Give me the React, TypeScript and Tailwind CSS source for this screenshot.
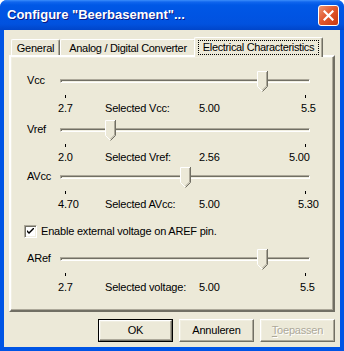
import React from 'react';

const sliders = [
  { label: 'Vcc', min: '2.7', max: '5.5', text: 'Selected Vcc:', value: '5.00', frac: 0.821, valW: 'w-[102px]', mt: 'mt-0' },
  { label: 'Vref', min: '2.0', max: '5.00', text: 'Selected Vref:', value: '2.56', frac: 0.187, valW: 'w-[90px]', mt: 'mt-[5px]' },
  { label: 'AVcc', min: '4.70', max: '5.30', text: 'Selected AVcc:', value: '5.00', frac: 0.5, valW: 'w-[99px]', mt: 'mt-[3px]' },
];

function Thumb({ left }: { left: number }) {
  return (
    <svg className="absolute top-0" style={{ left }} width="11" height="21" viewBox="0 0 11 21">
      <polygon points="0.5,0.5 10.5,0.5 10.5,15.5 5.5,20.5 0.5,15.5" fill="#ECE9D8" />
      <polyline points="5,20 0.5,15.5 0.5,0.5 10,0.5" fill="none" stroke="#FFFFFF" />
      <polyline points="10.5,0 10.5,15.5 5.5,20.5" fill="none" stroke="#716F64" />
      <polyline points="9.5,1 9.5,15 5.5,19" fill="none" stroke="#ACA899" />
    </svg>
  );
}

function Track({ label, frac }: { label: string; frac: number }) {
  return (
    <div className="flex ml-[16px]">
      <span className="w-[33px] mt-[3px] leading-[13px]">{label}</span>
      <div className="relative w-[250px] h-[31px]">
        <div className="absolute left-0 top-[8px] w-[250px] h-[4px] border border-t-[#ACA899] border-l-[#ACA899] border-b-white border-r-white shadow-[inset_1px_1px_#716F64,inset_-1px_-1px_#F1EFE2]" />
        <Thumb left={Math.round(frac * 240)} />
        <div className="absolute left-[5px] top-[24px] w-px h-[3px] bg-black" />
        <div className="absolute left-[245px] top-[24px] w-px h-[3px] bg-black" />
      </div>
    </div>
  );
}

function Labels({ min, text, value, max, valW }: { min: string; text: string; value: string; max: string; valW: string }) {
  return (
    <div className="flex ml-[47px] leading-[13px]">
      <span className="w-[47px]">{min}</span>
      <span className="w-[94px]">{text}</span>
      <span className={valW}>{value}</span>
      <span>{max}</span>
    </div>
  );
}

function Button({ children, primary, disabled }: { children: React.ReactNode; primary?: boolean; disabled?: boolean }) {
  return (
    <div className={`w-[75px] h-[23px] ${primary ? 'border border-black' : ''}`}>
      <div className="w-full h-full flex items-center justify-center border border-t-white border-l-white border-r-[#716F64] border-b-[#716F64] shadow-[inset_-1px_-1px_#ACA899,inset_1px_1px_#F1EFE2]">
        <span className={disabled ? 'text-[#ACA899] [text-shadow:1px_1px_#FFFFFF]' : ''}>{children}</span>
      </div>
    </div>
  );
}

export default function App() {
  return (
    <div className="w-[344px] h-[351px] flex flex-col bg-[#0055E5] rounded-t-[7px] overflow-hidden font-['Liberation_Sans',Arial,sans-serif] text-[11px] text-black whitespace-nowrap tracking-[-0.2px]">
      {/* Title bar */}
      <div className="h-[30px] shrink-0 flex items-center pl-[7px] pr-[5px] bg-[linear-gradient(to_bottom,#3C8EFB_0px,#1066EE_2px,#0058E6_5px,#0054E3_15px,#0152DF_24px,#0045C9_30px)]">
        <span className="flex-1 text-white font-bold text-[13px] tracking-normal [text-shadow:1px_1px_#0A1883]">Configure "Beerbasement"...</span>
        <div className="w-[21px] h-[21px] rounded-[3px] border border-white bg-[linear-gradient(135deg,#EC9471_0%,#E2592F_45%,#C7370F_100%)] flex items-center justify-center">
          <svg width="11" height="11" viewBox="0 0 11 11">
            <path d="M1.5 1.5 L9.5 9.5 M9.5 1.5 L1.5 9.5" stroke="#FFFFFF" strokeWidth="2.2" strokeLinecap="square" />
          </svg>
        </div>
      </div>

      {/* Client area */}
      <div className="flex-1 mx-[4px] mb-[4px] bg-[#ECE9D8] flex flex-col pt-[7px] px-[5px]">
        {/* Tabs */}
        <div className="flex items-end h-[18px] pl-[2px] relative z-10">
          <div className="w-[49px] h-[16px] flex items-center justify-center border-l border-t border-r border-l-white border-t-white border-r-[#716F64] rounded-t-[2px] shadow-[inset_-1px_0_#ACA899] pt-[1px]">
            General
          </div>
          <div className="w-[136px] h-[16px] flex items-center justify-center border-l border-t border-r border-l-white border-t-white border-r-[#716F64] rounded-t-[2px] shadow-[inset_-1px_0_#ACA899] pt-[1px] tracking-[-0.3px]">
            Analog / Digital Converter
          </div>
          <div className="-ml-[2px] -mb-[2px] w-[129px] h-[20px] bg-[#ECE9D8] flex pt-[2px] pl-[3px] border-l border-t border-r border-l-white border-t-white border-r-[#716F64] rounded-t-[2px] shadow-[inset_-1px_0_#ACA899]">
            <div className="w-[121px] h-[15px] flex items-center justify-center border border-dotted border-black tracking-[-0.35px]">
              Electrical Characteristics
            </div>
          </div>
        </div>

        {/* Panel */}
        <div className="h-[257px] flex flex-col pt-[14px] border-2 border-t-white border-l-white border-r-[#716F64] border-b-[#716F64] shadow-[inset_-1px_-1px_#ACA899,inset_1px_1px_#F1EFE2]">
          {sliders.map((s) => (
            <div key={s.label} className={s.mt}>
              <Track label={s.label} frac={s.frac} />
              <Labels min={s.min} text={s.text} value={s.value} max={s.max} valW={s.valW} />
            </div>
          ))}

          <div className="flex items-center mt-[14px] ml-[13px] h-[13px]">
            <div className="w-[13px] h-[13px] border border-t-[#ACA899] border-l-[#ACA899] border-b-white border-r-white shadow-[inset_1px_1px_#716F64,inset_-1px_-1px_#F1EFE2] bg-white flex items-center justify-center">
              <svg width="7" height="7" viewBox="0 0 7 7">
                <path d="M0 2 L0 4 L2 6 L7 1 L7 -1 L2 4 Z" fill="#000000" />
              </svg>
            </div>
            <span className="ml-[4px] leading-[13px]">Enable external voltage on AREF pin.</span>
          </div>

          <div className="mt-[11px]">
            <Track label="ARef" frac={0.821} />
            <div className="mt-[1px]">
              <Labels min="2.7" text="Selected voltage:" value="5.00" max="5.5" valW="w-[101px]" />
            </div>
          </div>
        </div>

        {/* Buttons */}
        <div className="flex justify-end gap-[6px] mt-[7px]">
          <Button primary>OK</Button>
          <Button>Annuleren</Button>
          <Button disabled>
            <span className="underline underline-offset-[2px]">T</span>oepassen
          </Button>
        </div>
      </div>
    </div>
  );
}
